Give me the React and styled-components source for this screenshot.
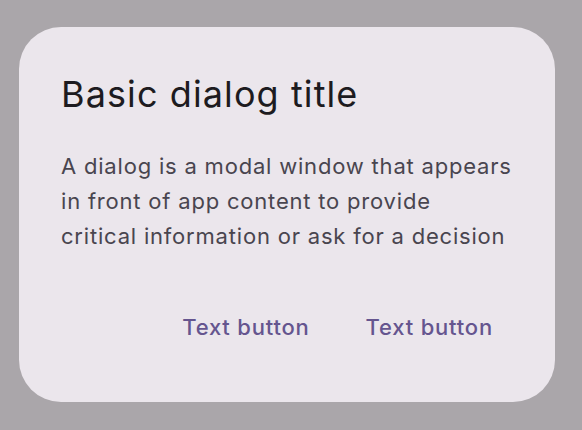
import React from 'react';
import styled, { createGlobalStyle } from 'styled-components';

const GlobalStyle = createGlobalStyle`
    html, body {
        margin: 0;
        padding: 0;
        background: #aaa6aa;
    }
`;

const Scrim = styled.div`
    width: 582px;
    height: 430px;
    box-sizing: border-box;
    padding: 27px 0 0 19px;
    background: #aaa6aa;
    font-family: Inter, 'Liberation Sans', sans-serif;
`;

const Dialog = styled.div`
    width: 536px;
    height: 375px;
    box-sizing: border-box;
    padding: 45px 22px 0 42px;
    background: #ebe6ec;
    border-radius: 42px;
    display: flex;
    flex-direction: column;
`;

const Title = styled.h2`
    margin: 0;
    font-size: 36px;
    font-weight: 400;
    line-height: 44px;
    letter-spacing: 1.1px;
    color: #1d1b20;
`;

const Body = styled.p`
    margin: 33px 0 0;
    font-size: 22px;
    line-height: 35px;
    letter-spacing: 0.8px;
    white-space: nowrap;
    color: #49454f;
`;

const Actions = styled.div`
    margin-top: auto;
    margin-bottom: 61px;
    display: flex;
    justify-content: flex-end;
    gap: 56px;
    padding-right: 40px;
`;

const TextButton = styled.button`
    border: 0;
    padding: 0;
    background: none;
    font-family: inherit;
    font-size: 22px;
    font-weight: 500;
    line-height: 28px;
    letter-spacing: 0.8px;
    color: #65558f;
    cursor: pointer;
`;

export default function App() {
    return (
        <Scrim>
            <GlobalStyle />
            <Dialog>
                <Title>Basic dialog title</Title>
                <Body>
                    A dialog is a modal window that appears
                    <br />
                    in front of app content to provide
                    <br />
                    critical information or ask for a decision
                </Body>
                <Actions>
                    <TextButton>Text button</TextButton>
                    <TextButton>Text button</TextButton>
                </Actions>
            </Dialog>
        </Scrim>
    );
}
